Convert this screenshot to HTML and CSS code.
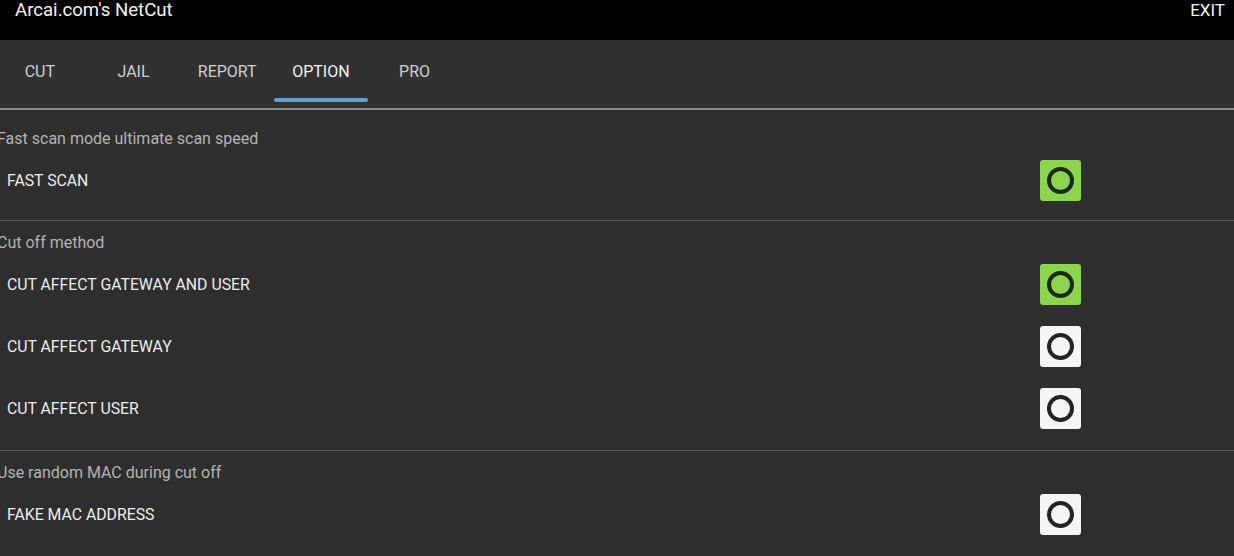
FILE: index.html
```html
<!DOCTYPE html>
<html>
<head>
<meta charset="utf-8">
<link rel="stylesheet" href="styles.css">
</head>
<body>
<header class="topbar">
  <div class="title">Arcai.com's NetCut</div>
  <div class="exit">EXIT</div>
</header>
<nav class="tabbar">
  <div class="tabs">
    <div class="tab">CUT</div>
    <div class="tab">JAIL</div>
    <div class="tab">REPORT</div>
    <div class="tab active">OPTION</div>
    <div class="tab">PRO</div>
  </div>
</nav>
<main class="content">
  <section class="section first">
    <div class="sec-title">Fast scan mode ultimate scan speed</div>
    <div class="row"><span class="label">FAST SCAN</span><span class="check on"><span class="ring"></span></span></div>
  </section>
  <section class="section">
    <div class="sec-title">Cut off method</div>
    <div class="row"><span class="label">CUT AFFECT GATEWAY AND USER</span><span class="check on"><span class="ring"></span></span></div>
    <div class="row"><span class="label">CUT AFFECT GATEWAY</span><span class="check"><span class="ring"></span></span></div>
    <div class="row"><span class="label">CUT AFFECT USER</span><span class="check"><span class="ring"></span></span></div>
  </section>
  <section class="section last">
    <div class="sec-title">Use random MAC during cut off</div>
    <div class="row"><span class="label">FAKE MAC ADDRESS</span><span class="check"><span class="ring"></span></span></div>
  </section>
</main>
</body>
</html>
```
FILE: styles.css
```css
* { box-sizing: border-box; }
html, body { margin: 0; padding: 0; }
body {
  width: 1234px;
  height: 556px;
  overflow: hidden;
  background: #2e2e2e;
  font-family: Roboto, "Liberation Sans", sans-serif;
}
.topbar {
  height: 40px;
  background: #000;
  display: flex;
  justify-content: space-between;
  align-items: flex-start;
  padding: 0 9px 0 15px;
  color: #f2f2f2;
}
.title { font-size: 18.6px; line-height: 20px; }
.exit { font-size: 17px; line-height: 20px; }
.tabbar {
  height: 70px;
  background: #313131;
  border-bottom: 2px solid #8a8a8a;
}
.tabs {
  display: flex;
  margin-left: -7px;
  height: 68px;
}
.tab {
  width: 93.7px;
  display: flex;
  align-items: center;
  justify-content: center;
  padding-bottom: 6px;
  font-size: 16px;
  color: #cfcfcf;
  position: relative;
}
.tab.active { color: #f2f2f2; }
.tab.active::after {
  content: "";
  position: absolute;
  left: 0;
  right: 0;
  bottom: 6px;
  height: 4px;
  border-radius: 2px;
  background: #5da3d3;
}
.content { margin-left: -3px; }
.section {
  border-bottom: 1px solid #575757;
  padding-bottom: 11px;
}
.section.first { padding-bottom: 9px; }
.section.last { border-bottom: none; }
.sec-title {
  padding-top: 12px;
  font-size: 16px;
  line-height: 20px;
  color: #b3b3b3;
}
.section.first .sec-title { padding-top: 19px; }
.row {
  height: 62px;
  display: flex;
  align-items: center;
  justify-content: space-between;
  padding-left: 10px;
  padding-right: 153px;
}
.label {
  font-size: 15.8px;
  color: #ececec;
}
.check {
  width: 41px;
  height: 41px;
  border-radius: 3px;
  background: #f5f5f5;
  display: flex;
  align-items: center;
  justify-content: center;
}
.check.on { background: #8bd64e; }
.ring {
  width: 27px;
  height: 27px;
  border-radius: 50%;
  border: 4px solid #232323;
}
.check.on .ring { border-color: #1c2714; }
```
